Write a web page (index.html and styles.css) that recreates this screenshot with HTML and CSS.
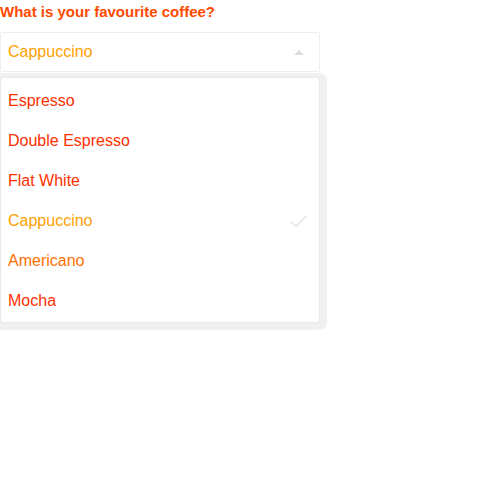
FILE: index.html
```html
<!DOCTYPE html>
<html>
<head>
<meta charset="utf-8">
<link rel="stylesheet" href="styles.css">
</head>
<body>
<div class="field">
  <label class="label">What is your favourite coffee?</label>
  <div class="select">
    <span class="value">Cappuccino</span>
    <span class="caret"></span>
  </div>
  <div class="menu-wrap">
    <ul class="menu">
      <li class="opt">Espresso</li>
      <li class="opt">Double Espresso</li>
      <li class="opt">Flat White</li>
      <li class="opt selected">Cappuccino
        <svg class="check" width="18" height="14" viewBox="0 0 18 14"><path d="M1 7.5 L6 12.5 L17 1.5" fill="none" stroke="#e6e6e6" stroke-width="1.6"/></svg>
      </li>
      <li class="opt mid">Americano</li>
      <li class="opt">Mocha</li>
    </ul>
  </div>
</div>
</body>
</html>
```
FILE: styles.css
```css
html, body {
  margin: 0;
  padding: 0;
  background: #fff;
  font-family: "Liberation Sans", Arial, sans-serif;
}
.field {
  width: 327px;
  display: flex;
  flex-direction: column;
  align-items: flex-start;
}
.label {
  display: block;
  font-size: 15px;
  font-weight: bold;
  color: #ff4a00;
  line-height: 24px;
  padding-bottom: 8px;
}
.select {
  width: 320px;
  height: 40px;
  box-sizing: border-box;
  border: 1px solid #eee;
  border-radius: 2px;
  display: flex;
  align-items: center;
  justify-content: space-between;
  padding: 0 15px 0 7px;
  font-size: 16px;
  color: #ffa000;
}
.caret {
  width: 0;
  height: 0;
  border-left: 5px solid transparent;
  border-right: 5px solid transparent;
  border-bottom: 5px solid #ddd;
}
.menu-wrap {
  margin-top: 1px;
  padding: 4px 7px 7px 0;
  background: #f0f0f0;
  border-radius: 0 8px 8px 0;
}
.menu {
  width: 320px;
  box-sizing: border-box;
  list-style: none;
  margin: 0;
  padding: 3px 0 1px;
  border: 1px solid #e8e8e8;
  border-radius: 3px;
  background: #fff;
}
.opt {
  height: 40px;
  display: flex;
  align-items: center;
  justify-content: space-between;
  padding: 0 11px 0 7px;
  font-size: 16px;
  color: #ff3000;
}
.opt.selected {
  color: #ffa000;
}
.opt.mid {
  color: #ff7000;
}
.check {
  display: block;
}
```
